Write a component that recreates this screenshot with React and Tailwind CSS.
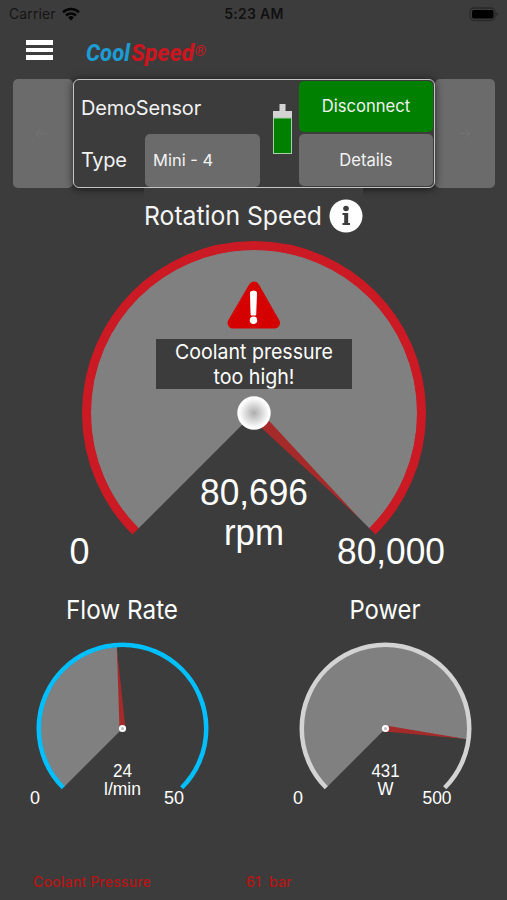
import React from "react";

const SANS = "font-['Inter',sans-serif]";

function polar(cx, cy, r, deg) {
  const a = (deg * Math.PI) / 180;
  return [cx + r * Math.sin(a), cy - r * Math.cos(a)];
}

// Angles are measured clockwise from twelve o'clock; the scale runs from -135 to 135.
function arcPath(cx, cy, r, from, to) {
  const [x1, y1] = polar(cx, cy, r, from);
  const [x2, y2] = polar(cx, cy, r, to);
  return `M${x1} ${y1}A${r} ${r} 0 ${to - from > 180 ? 1 : 0} 1 ${x2} ${y2}`;
}

function Dial({ cx, cy, radius, stroke, color, angle, needleLength, needleWidth }) {
  const inner = radius - stroke;
  return (
    <>
      <path d={`${arcPath(cx, cy, inner + 0.5, -135, angle)}L${cx} ${cy}Z`} fill="#808080" />
      <path d={arcPath(cx, cy, radius - stroke / 2, -135, 135)} fill="none" stroke={color} strokeWidth={stroke} />
      <path
        d={`M${cx - needleWidth} ${cy}L${cx} ${cy - needleLength}L${cx + needleWidth} ${cy}Z`}
        transform={`rotate(${angle} ${cx} ${cy})`}
        fill="#a52a2a"
      />
    </>
  );
}

function Label({ x, y, size, width, children, family = "Liberation Sans, Arial, sans-serif" }) {
  return (
    <text x={x} y={y} fontSize={size} textAnchor="middle" fill="#fff" fontFamily={family} textLength={width} lengthAdjust="spacingAndGlyphs">
      {children}
    </text>
  );
}

function SmallGauge({ title, titleWidth, color, angle, value, valueWidth, unit, unitWidth, max, maxWidth }) {
  return (
    <section className="w-[220px]">
      <svg width="220" height="230" viewBox="0 0 220 230" className="block">
        <Label x={110} y={29} size={26} width={titleWidth} family="Inter, sans-serif">{title}</Label>
        <Dial cx={110.5} cy={138.5} radius={86} stroke={4.5} color={color} angle={angle} needleLength={81} needleWidth={3} />
        <circle cx="110.5" cy="138.5" r="3.6" fill="#fff" />
        <circle cx="110.5" cy="138.5" r="1.5" fill="#bbb" />
        <Label x={110.5} y={186.5} size={17.5} width={valueWidth}>{value}</Label>
        <Label x={110.5} y={205} size={17.5} width={unitWidth}>{unit}</Label>
        <Label x={23} y={214} size={17.5} width={10}>0</Label>
        <Label x={162} y={214} size={17.5} width={maxWidth}>{max}</Label>
      </svg>
    </section>
  );
}

function StatusBar() {
  return (
    <div className="flex h-7 items-center justify-between pl-[9px] pr-2 text-[#111]">
      <div className="flex w-[200px] items-center gap-1.5">
        <span className="text-[14px] leading-none tracking-[0.1px] text-[#151515]">Carrier</span>
        <svg width="18" height="14" viewBox="0 0 18 14" fill="none" stroke="#050505" strokeWidth="2.5">
          <path d="M1 5.4a11.3 11.3 0 0 1 16 0M4 8.5a7.1 7.1 0 0 1 10 0" />
          <path d="M9 13.5l-2.9-3a4.1 4.1 0 0 1 5.8 0z" fill="#050505" stroke="none" />
        </svg>
      </div>
      <span className="text-[14px] font-semibold leading-none tracking-[0.3px]">5:23 AM</span>
      <div className="flex w-[200px] justify-end">
        <svg width="30" height="15" viewBox="0 0 30 15">
          <rect x="1" y="1" width="25" height="12.5" rx="4" fill="none" stroke="#292929" strokeWidth="1.3" />
          <rect x="3" y="3" width="21.5" height="8.5" rx="1.8" fill="#000" />
          <path d="M27.5 5c1.8.8 1.8 3.7 0 4.5z" fill="#222" />
        </svg>
      </div>
    </div>
  );
}

function Header() {
  return (
    <header className="flex h-[51px] items-start">
      <button aria-label="Menu" className="ml-[26px] mt-[12px] flex w-[27px] flex-col gap-[3px]">
        <span className="h-[4.5px] bg-white" />
        <span className="h-[4.5px] bg-white" />
        <span className="h-[4.5px] bg-white" />
      </button>
      <svg width="124" height="36" viewBox="0 0 124 36" className="ml-[32px] mt-[6px]" fontFamily="Roboto, sans-serif" fontStyle="italic" fontWeight="800">
        <text x="1" y="27" fontSize="24" fill="#1d9bd3" textLength="44" lengthAdjust="spacingAndGlyphs">Cool</text>
        <text x="46" y="27" fontSize="24" fill="#cb161f" textLength="63" lengthAdjust="spacingAndGlyphs">Speed</text>
        <text x="109.500" y="21.500" fontSize="15" fontWeight="800" fill="#cb161f" textLength="11.500" lengthAdjust="spacingAndGlyphs">®</text>
      </svg>
    </header>
  );
}

function SensorPanel() {
  return (
    <div className="flex h-[109px] px-[13px] text-[#f2f2f2]">
      <button className="h-[109px] w-[60px] shrink-0 rounded-[5px] bg-[#6b6b6b] pr-1 text-[15px] text-[#717171]">←</button>
      <div className="relative flex h-[109px] w-[362px] shrink-0 rounded-[6px] border-[1.5px] border-[#c4c4c4] bg-[#3c3c3c] shadow-[0_1px_8px_rgba(0,0,0,0.65)]">
        <div className="flex w-[187px] flex-col justify-between">
          <span className="mt-[14px] pl-[7px] text-[20px] leading-7 tracking-[-0.2px]">DemoSensor</span>
          <div className="flex items-center">
            <span className="w-[71px] pb-[2px] pl-[7px] text-[20px] leading-7 tracking-[-0.3px]">Type</span>
            <span className="flex h-[53px] w-[115px] items-center rounded-[5px] bg-[#6b6b6b] pl-[8px] text-[16.5px]">Mini - 4</span>
          </div>
        </div>
        <svg width="20" height="51" viewBox="0 0 20 51" className="ml-[12px] mt-[24px] shrink-0">
          <path d="M6.500 0h6v7h6.500v7h-19v-7h6.500z" fill="#d3d3d3" />
          <rect x="0.5" y="14" width="18" height="35.500" fill="#008000" stroke="#a9cfa9" />
        </svg>
        <div className="ml-[6px] flex flex-1 flex-col gap-[2px] pr-px pt-px text-[16.6px]">
          <button className="h-[51px] rounded-[5px] bg-[#008000] pb-px">Disconnect</button>
          <button className="h-[52px] rounded-[5px] bg-[#6b6b6b]">Details</button>
        </div>
      </div>
      <button className="h-[109px] w-[60px] shrink-0 rounded-[5px] bg-[#6b6b6b] text-[15px] text-[#727272]">→</button>
    </div>
  );
}

function RotationGauge() {
  return (
    <section>
      <div className="relative mx-auto flex h-[49px] w-[219px] items-center justify-between bg-[#3c3c3c] pt-[7px]">
        <svg width="182" height="40" viewBox="0 0 182 40">
          <text x="0" y="29" fontSize="26" fill="#f5f5f5" fontFamily="Inter, sans-serif" textLength="178" lengthAdjust="spacingAndGlyphs">Rotation Speed</text>
        </svg>
        <svg width="34" height="34" viewBox="0 0 34 34">
          <circle cx="17" cy="17" r="16.500" fill="#fff" />
          <circle cx="17" cy="9.500" r="2.800" fill="#3c3c3c" />
          <path d="M13.500 14h5.700v10h1.800v2h-7.500v-2h1.700v-8h-1.700z" fill="#3c3c3c" />
        </svg>
      </div>
      <svg width="507" height="345" viewBox="0 237 507 345" className="block">
        <defs>
          <radialGradient id="hub">
            <stop offset="0" stopColor="#acacac" />
            <stop offset="0.9" stopColor="#fff" />
          </radialGradient>
        </defs>
        <Dial cx={254} cy={413} radius={172} stroke={9} color="#cb1a24" angle={135} needleLength={150} needleWidth={5.8} />
        <circle cx="254" cy="413" r="16.700" fill="url(#hub)" />
        <path d="M254 287L274.500 323H233Z" fill="#d50000" stroke="#d50000" strokeWidth="11" strokeLinejoin="round" />
        <path d="M250.500 292q3-2 6 0l-.8 23h-4.600z" fill="#fff" stroke="#fff" strokeWidth="1" strokeLinejoin="round" />
        <circle cx="253.500" cy="320.300" r="3.700" fill="#fff" />
        <rect x="156" y="339" width="196" height="50" fill="#3c3c3c" />
        <Label x={254} y={359} size={20.5} width={158} family="Inter, sans-serif">Coolant pressure</Label>
        <Label x={254} y={383.500} size={20.5} width={81} family="Inter, sans-serif">too high!</Label>
        <Label x={254} y={504.500} size={36} width={108}>80,696</Label>
        <Label x={254} y={545} size={36} width={60}>rpm</Label>
        <Label x={79.500} y={564} size={36} width={20}>0</Label>
        <Label x={391} y={564} size={36} width={108}>80,000</Label>
      </svg>
    </section>
  );
}

export default function App() {
  return (
    <main className={`flex h-[900px] w-[507px] flex-col overflow-hidden bg-[#3c3c3c] ${SANS}`}>
      <StatusBar />
      <Header />
      <SensorPanel />
      <RotationGauge />
      <div className="mt-[8px] flex gap-[42.5px] pl-[12px]">
        <SmallGauge title="Flow Rate" titleWidth={112} color="#00bfff" angle={-4} value="24" valueWidth={19} unit="l/min" unitWidth={37} max="50" maxWidth={20} />
        <SmallGauge title="Power" titleWidth={71} color="#d3d3d3" angle={97.500} value="431" valueWidth={28} unit="W" unitWidth={16} max="500" maxWidth={29} />
      </div>
      <footer className="mt-auto flex h-[37px] items-center pl-[33px] text-[14px] font-medium tracking-[0.2px] text-[#b81414]">
        <span className="w-[213px]">Coolant Pressure</span>
        <span className="whitespace-pre">61  bar</span>
      </footer>
    </main>
  );
}
